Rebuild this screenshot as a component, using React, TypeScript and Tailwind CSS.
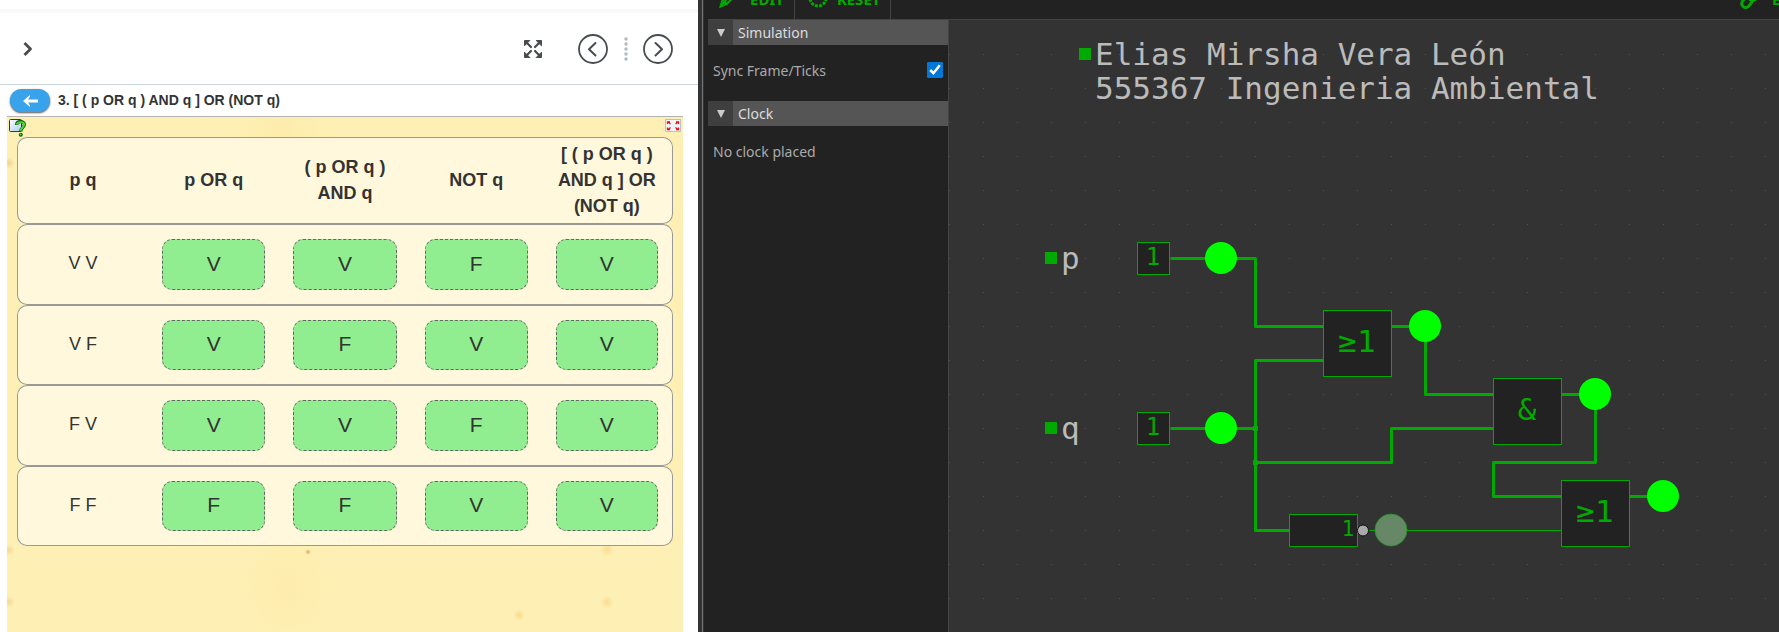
import React from "react";

const HEADERS = ["p q", "p OR q", "( p OR q ) AND q", "NOT q", "[ ( p OR q ) AND q ] OR (NOT q)"];

const ROWS = [
  ["V V", "V", "V", "F", "V"],
  ["V F", "V", "F", "V", "V"],
  ["F V", "V", "V", "F", "V"],
  ["F F", "F", "F", "V", "V"],
];

function ExpandIcon() {
  return (
    <svg width="18" height="18" viewBox="0 0 18 18" fill="#494c4e" stroke="#494c4e" aria-hidden="true">
      {[0, 90, 180, 270].map((r) => (
        <g key={r} transform={`rotate(${r} 9 9)`}>
          <path d="M0.500 0.500H5.800L0.500 5.800Z" strokeWidth="1" strokeLinejoin="round" />
          <path d="M2 2L7 7" strokeWidth="2.200" strokeLinecap="round" />
        </g>
      ))}
    </svg>
  );
}

function CircleArrow({ next = false }: { next?: boolean }) {
  return (
    <svg width="30" height="30" viewBox="0 0 30 30" fill="none" stroke="#494c4e" aria-hidden="true">
      <circle cx="15" cy="15" r="14" strokeWidth="1.800" />
      <path d={next ? "M12.500 9L19 15.200L12.500 21.500" : "M17.500 9L11 15.200L17.500 21.500"} strokeWidth="2" strokeLinecap="round" strokeLinejoin="round" />
    </svg>
  );
}

function QuestionCardIcon() {
  return (
    <svg width="18" height="18" viewBox="0 0 18 18" aria-hidden="true">
      <defs>
        <linearGradient id="card" x1="0" y1="0" x2="1" y2="1">
          <stop offset="0" stopColor="#fff" />
          <stop offset="1" stopColor="#a9cdf0" />
        </linearGradient>
      </defs>
      <rect x="0.500" y="0.500" width="12" height="12" rx="1" fill="url(#card)" stroke="#1d3d73" />
      <path d="M7.600 6C7.600 1.600 15.400 1.600 15.400 5.600C15.400 8.400 11.800 8.600 11.800 12.400" fill="none" stroke="#0b5a10" strokeWidth="3.200" />
      <path d="M7.800 5.600C8.200 2.300 15.200 2.300 15.200 5.600C15.200 8 11.800 8.600 11.800 11.800" fill="none" stroke="#4fd63a" strokeWidth="1.900" />
      <circle cx="11.800" cy="15.800" r="2" fill="#0b5a10" />
      <circle cx="11.600" cy="15.500" r="1" fill="#4fd63a" />
    </svg>
  );
}

function FullscreenBadgeIcon() {
  return (
    <svg width="16" height="13" viewBox="0 0 16 13" aria-hidden="true">
      <rect x="0.500" y="0.500" width="15" height="12" fill="#f1f3f8" stroke="#bcc0cc" />
      <path d="M2.500 5V3H5M3 3L5.500 5M13.500 5V3H11M13 3L10.500 5M2.500 8.500V10.500H5M3 10.500L5.500 8.500M13.500 8.500V10.500H11M13 10.500L10.500 8.500" stroke="#ee1111" strokeWidth="1.300" fill="none" />
    </svg>
  );
}

function ActivityPanel() {
  return (
    <section className="flex min-w-0 flex-[698] flex-col bg-white font-['Liberation_Sans',Arial,sans-serif] text-[#333]">
      <div className="h-[13px] border-b-4 border-[#f9f9f9]" />
      <header className="flex h-[72px] items-center border-b border-[#cdd5dc] pr-[25px] pl-[20px]">
        <button aria-label="Open panel" className="flex h-8 w-4 items-center justify-center">
          <svg width="10" height="14" viewBox="0 0 10 14" fill="none" stroke="#494c4e" strokeWidth="2.800" aria-hidden="true">
            <path d="M1.500 1L7.500 7L1.500 13" strokeLinejoin="round" />
          </svg>
        </button>
        <button aria-label="Full screen" className="ml-auto"><ExpandIcon /></button>
        <button aria-label="Previous" className="ml-9"><CircleArrow /></button>
        <svg width="4" height="24" viewBox="0 0 4 24" fill="#b1b8be" className="mr-[15px] ml-4" aria-hidden="true">
          {[2, 7, 12, 17, 22].map((y) => <circle key={y} cx="2" cy={y} r="1.700" />)}
        </svg>
        <button aria-label="Next"><CircleArrow next /></button>
      </header>
      <div className="mr-[15px] ml-[7px] flex h-[32px] items-center gap-2 border-b border-[#b3b3b3] pl-[3px]">
        <button aria-label="Back" className="flex h-[23px] w-10 items-center justify-center rounded-full bg-[#38a3ea] shadow-[0_1px_2px_#555]">
          <svg width="15" height="12" viewBox="0 0 15 12" aria-hidden="true">
            <path d="M0 6L7 0V1.500L5 4.500H15V7.500H5L7 10.500V12Z" fill="#fff" />
          </svg>
        </button>
        <h1 className="text-[14px] font-bold">3. [ ( p OR q ) AND q ] OR (NOT q)</h1>
      </div>
      <div className="mr-[15px] ml-[7px] flex-1 bg-[#fef0b5] bg-[radial-gradient(circle_at_301px_435px,#d9a866_0,transparent_3px),radial-gradient(circle_at_600px_433px,#f9dc93_0,transparent_7px),radial-gradient(circle_at_600px_485px,#f9dc93_0,transparent_7px),radial-gradient(circle_at_512px_498px,#f9d88c_0,transparent_6px),radial-gradient(circle_at_2px_433px,#f7d792_0,transparent_6px),radial-gradient(circle_at_2px_485px,#f7d792_0,transparent_6px),radial-gradient(circle_at_2px_46px,#f5d388_0,transparent_6px),radial-gradient(ellipse_at_280px_470px,#fdecac_0,transparent_60px),radial-gradient(ellipse_at_275px_12px,#fdecac_0,transparent_60px)]">
        <div className="flex h-5 items-start justify-between pt-[2px] pr-[2px] pl-[2px]">
          <button aria-label="Help"><QuestionCardIcon /></button>
          <button aria-label="Expand activity"><FullscreenBadgeIcon /></button>
        </div>
        <div className="px-[10px]">
          <table className="w-full table-fixed border-separate border-spacing-0">
            <thead>
              <tr className="h-[87px]">
                {HEADERS.map((h) => (
                  <th key={h} className="border-y border-[#999] bg-[#fff8dc] px-3 pb-[2px] text-[18px] leading-[26px] font-bold first:rounded-l-[10px] first:border-l last:rounded-r-[10px] last:border-r">
                    {h}
                  </th>
                ))}
              </tr>
            </thead>
            <tbody>
              {ROWS.map(([inputs, ...values]) => (
                <tr key={inputs} className="group">
                  <th scope="row" className="rounded-l-[10px] border-y border-l border-[#999] bg-[#fff8dc] pb-[2px] text-[18px] font-normal">{inputs}</th>
                  {values.map((v, i) => (
                    <td key={i} className="border-y border-[#999] bg-[#fff8dc] p-[14px] last:rounded-r-[10px] last:border-r">
                      <div className="flex h-[51px] items-center justify-center rounded-[10px] border border-dashed border-[#666] bg-[#90ee90] pb-[2px] text-[21px] group-even:h-[50px]">
                        {v}
                      </div>
                    </td>
                  ))}
                </tr>
              ))}
            </tbody>
          </table>
        </div>
      </div>
    </section>
  );
}

function ToolButton({ icon, label }: { icon: React.ReactNode; label: string }) {
  return (
    <button className="flex h-[40px] shrink-0 items-center gap-2 border-r border-[#444] px-[10px] text-[15px] font-bold text-[#00aa00]">
      {icon}
      {label}
    </button>
  );
}

function PencilIcon() {
  return (
    <svg width="24" height="20" viewBox="0 0 24 20" fill="none" stroke="#00aa00" aria-hidden="true">
      <path d="M2.500 17.500L4.500 11L14 0.500L18.500 4.500L9 15Z" strokeWidth="2" />
      <path d="M4.500 11L9 15M2.500 17.500L7 12L16 3" strokeWidth="1.800" />
    </svg>
  );
}

function SpinnerIcon() {
  return (
    <svg width="24" height="22" viewBox="0 0 24 22" aria-hidden="true">
      <circle cx="13" cy="10" r="8" fill="none" stroke="#00aa00" strokeWidth="3" strokeDasharray="3 1.188" />
    </svg>
  );
}

function LinkIcon() {
  return (
    <svg width="24" height="20" viewBox="0 0 24 20" fill="none" stroke="#00aa00" strokeWidth="3" aria-hidden="true">
      <rect x="1" y="9" width="12" height="8" rx="4" transform="rotate(-50 7 13)" />
      <rect x="8" y="2" width="12" height="8" rx="4" transform="rotate(-50 14 6)" />
    </svg>
  );
}

function SidebarHeading({ children }: { children: React.ReactNode }) {
  return (
    <h2 className="flex h-[25px] items-center bg-[#555] text-[14px] text-[#ddd]">
      <button aria-label="Toggle section" className="flex h-full w-[25px] items-center justify-center bg-[#3f3f3f]">
        <svg width="8" height="8" viewBox="0 0 8 8" fill="#ccc" aria-hidden="true"><path d="M0 0H8L4 8Z" /></svg>
      </button>
      <span className="pl-[5px]">{children}</span>
    </h2>
  );
}

const WIRES = [
  "M222 238H307V306H375",
  "M222 408H307",
  "M375 340H307V510H341",
  "M307 442H443V408H545",
  "M443 306H477V374H545",
  "M613 374H647V442H545V476H613",
  "M681 476H715",
];

const LAMPS = [[272, 238], [272, 408], [476, 306], [646, 374], [714, 476]];

const GATES = [
  { x: 374, y: 290, label: "≥1" },
  { x: 544, y: 358, label: "&" },
  { x: 612, y: 460, label: "≥1" },
];

const INPUTS = [
  { y: 238, name: "p" },
  { y: 408, name: "q" },
];

function Circuit() {
  return (
    <svg className="block h-full min-h-[612px] w-full font-['DejaVu_Sans_Mono',monospace]" role="img" aria-label="Logic circuit">
      <defs>
        <pattern id="grid" width="34" height="34" patternUnits="userSpaceOnUse">
          <rect width="1" height="1" fill="#008800" />
        </pattern>
      </defs>
      <rect width="100%" height="100%" fill="#333" />
      <rect y="34" width="100%" height="100%" fill="url(#grid)" />
      <rect x="130" y="28" width="12" height="12" fill="#00aa00" />
      <g fill="#bbb" fontSize="31">
        <text x="146" y="45">Elias Mirsha Vera León</text>
        <text x="146" y="79">555367 Ingenieria Ambiental</text>
      </g>
      <g transform="translate(-1 0)">
        <g transform="translate(0.5 0.5)" fill="none" stroke="#00aa00" strokeWidth="3" strokeLinejoin="round">
          {WIRES.map((d) => <path key={d} d={d} />)}
          <path d="M420 510H613" strokeWidth="1" />
        </g>
        <rect x="305" y="406" width="5" height="5" fill="#00aa00" />
        <rect x="305" y="440" width="5" height="5" fill="#00aa00" />
        {INPUTS.map(({ y, name }) => (
          <g key={name}>
            <rect x="97" y={y - 6} width="12" height="12" fill="#00aa00" />
            <text x="113" y={y + 11} fontSize="31" fill="#bbb">{name}</text>
            <rect x="189.500" y={y - 15.5} width="32" height="32" fill="#222" stroke="#00aa00" />
            <text x="205" y={y + 7} fontSize="24" textAnchor="middle" fill="#00aa00">1</text>
          </g>
        ))}
        {GATES.map(({ x, y, label }) => (
          <g key={x}>
            <rect x={x + 1.5} y={y + 0.5} width="68" height="66" fill="#222" stroke="#00aa00" />
            <text x={x + 35} y={y + 42} fontSize="31" textAnchor="middle" fill="#00aa00">{label}</text>
          </g>
        ))}
        <rect x="341.500" y="494.500" width="68" height="32" fill="#222" stroke="#00aa00" />
        <text x="400" y="516" fontSize="21" textAnchor="middle" fill="#00aa00">1</text>
        <circle cx="415" cy="510.500" r="5.500" fill="#aaa" stroke="#111" />
        {LAMPS.map(([x, y]) => <circle key={x + "-" + y} cx={x + 1} cy={y} r="16" fill="#00ff00" />)}
        <circle cx="443" cy="510" r="16" fill="#668866" stroke="#229922" strokeWidth="0.800" />
      </g>
    </svg>
  );
}

function Simulator() {
  return (
    <section className="flex min-w-0 flex-[1071] flex-col bg-[#222] font-['Noto_Sans',sans-serif]">
      <nav className="flex h-5 items-end overflow-hidden border-b border-[#444]">
        <ToolButton icon={<PencilIcon />} label="EDIT" />
        <ToolButton icon={<SpinnerIcon />} label="RESET" />
        <div className="ml-auto w-[49px]">
          <ToolButton icon={<LinkIcon />} label="EXAMPLES" />
        </div>
      </nav>
      <div className="flex flex-1">
        <aside className="w-[241px] shrink-0 border-r border-[#444] text-[14px] text-[#aaa]">
          <SidebarHeading>Simulation</SidebarHeading>
          <div className="flex h-[56px] items-center justify-between px-[5px] pb-[6px]">
            <label htmlFor="sync">Sync Frame/Ticks</label>
            <input id="sync" type="checkbox" defaultChecked className="h-4 w-4 accent-[#0078d7]" />
          </div>
          <SidebarHeading>Clock</SidebarHeading>
          <p className="flex h-[56px] items-center px-[5px] pb-[6px]">No clock placed</p>
        </aside>
        <main className="min-w-0 flex-1">
          <Circuit />
        </main>
      </div>
    </section>
  );
}

export default function App() {
  return (
    <div className="flex min-h-screen overflow-hidden">
      <ActivityPanel />
      <div className="flex w-[10px] shrink-0 bg-[#333]">
        <div className="ml-1 w-px bg-[#777]" />
        <div className="ml-px w-1 bg-[#222]" />
      </div>
      <Simulator />
    </div>
  );
}
